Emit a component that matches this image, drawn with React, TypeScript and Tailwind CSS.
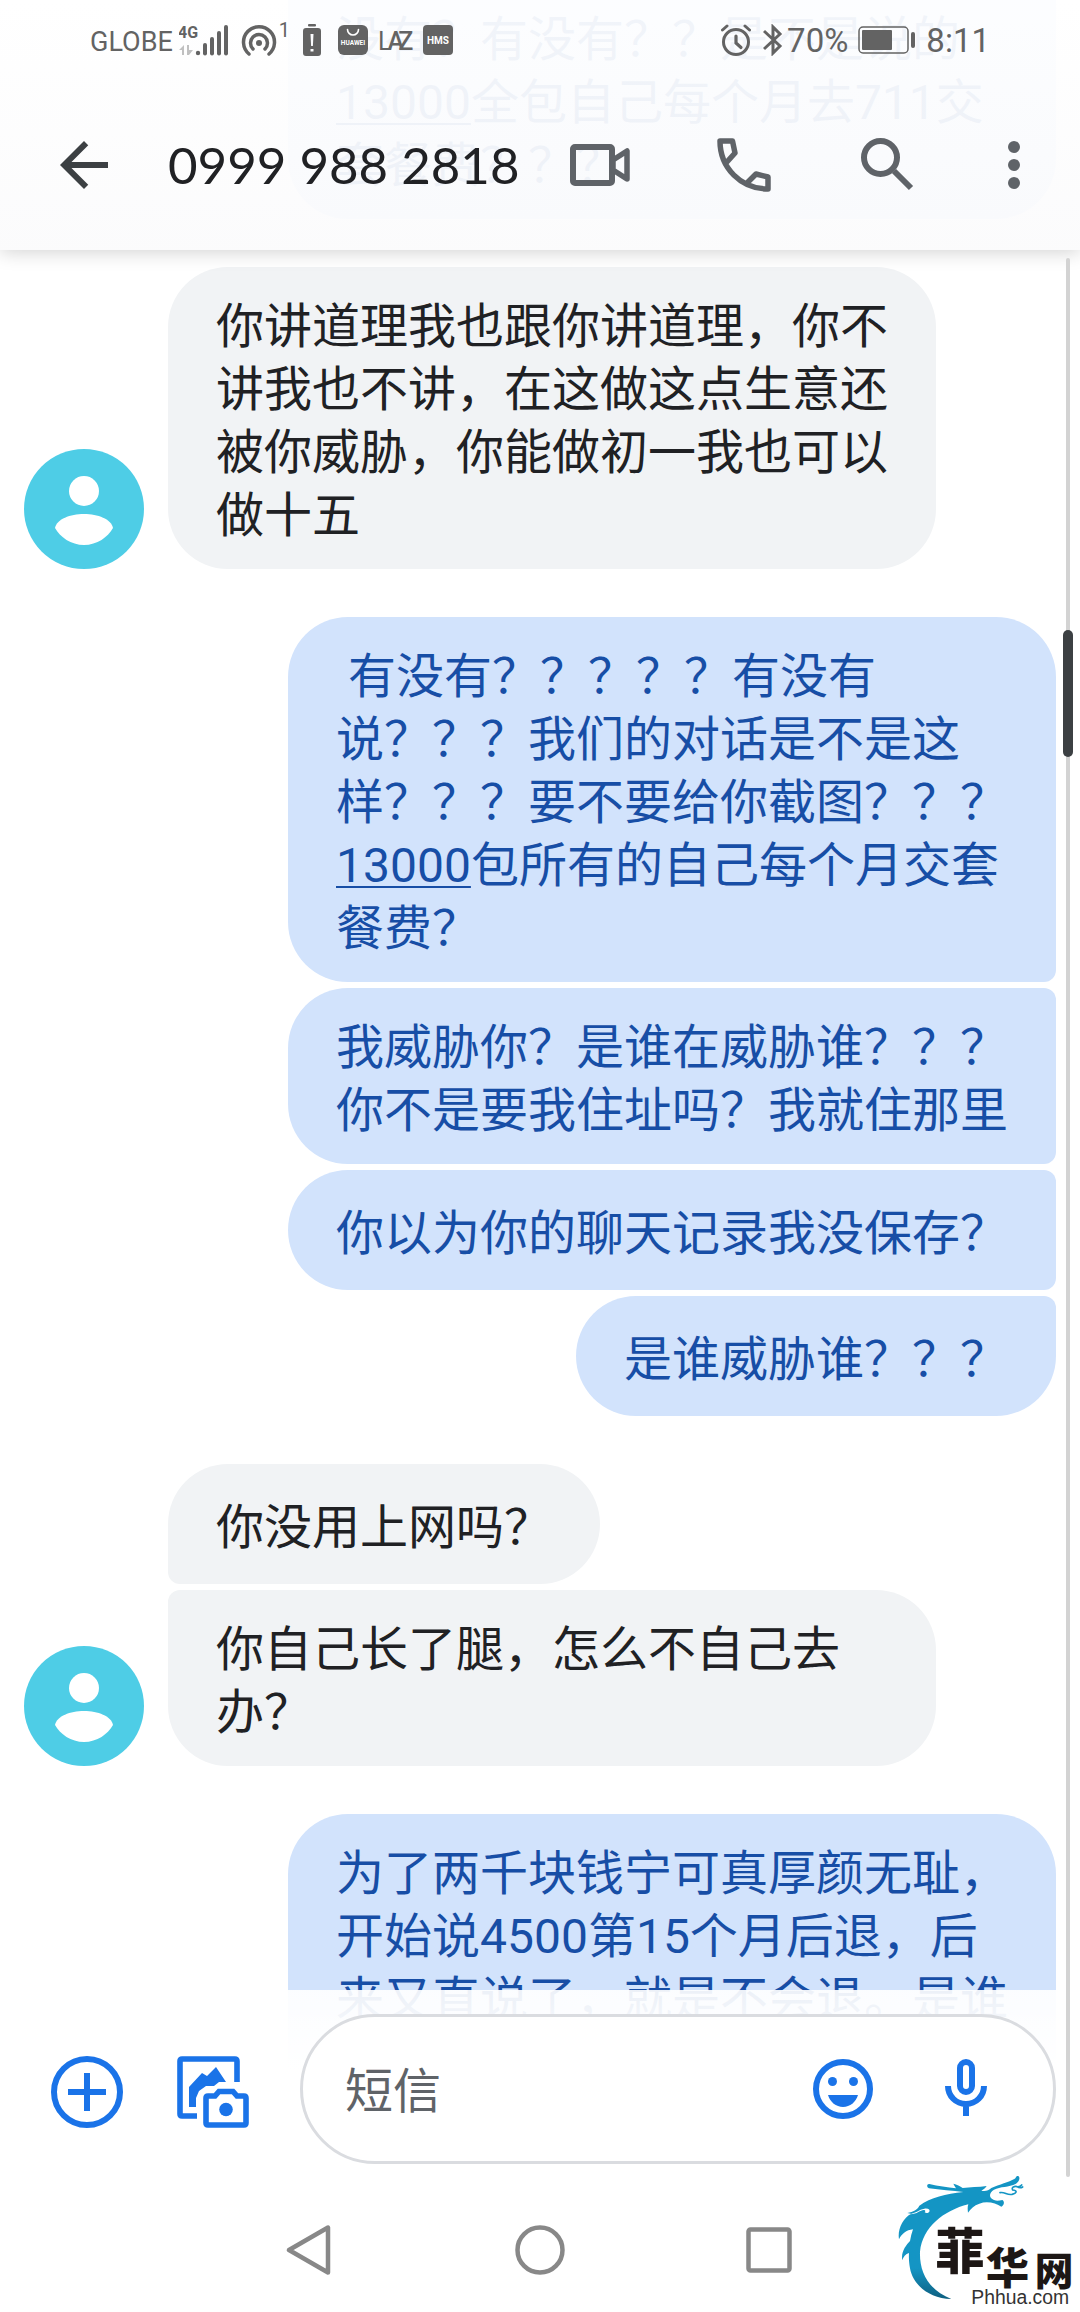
import { ReactNode } from 'react';

type Side = 'in' | 'out';

type Message = {
    shape: string;
    body: ReactNode;
};

type Group = {
    side: Side;
    messages: Message[];
};

function Amount() {
    return <a href="tel:13000" className="underline decoration-2 underline-offset-4">13000</a>;
}

const groups: Group[] = [
    {
        side: 'out',
        messages: [
            {
                shape: 'rounded-b-[60px] pt-2 pb-[22px]',
                body: <>没有？有没有？？是不是说的<Amount />全包自己每个月去711交套餐费？？？</>
            }
        ]
    },
    {
        side: 'in',
        messages: [
            {
                shape: 'rounded-[60px] pt-7 pb-[22px]',
                body: '你讲道理我也跟你讲道理，你不讲我也不讲，在这做这点生意还被你威胁，你能做初一我也可以做十五'
            }
        ]
    },
    {
        side: 'out',
        messages: [
            {
                shape: 'rounded-[60px] rounded-br-xl pt-7 pb-[22px]',
                body: <>{' '}有没有？？？？？有没有说？？？我们的对话是不是这样？？？要不要给你截图？？？<Amount />包所有的自己每个月交套餐费？</>
            },
            {
                shape: 'rounded-l-[60px] rounded-r-xl pt-7 pb-[22px]',
                body: '我威胁你？是谁在威胁谁？？？你不是要我住址吗？我就住那里'
            },
            {
                shape: 'rounded-l-[60px] rounded-r-xl pt-7 pb-[22px]',
                body: '你以为你的聊天记录我没保存？'
            },
            {
                shape: 'rounded-[60px] rounded-tr-xl pt-7 pb-[22px]',
                body: '是谁威胁谁？？？'
            }
        ]
    },
    {
        side: 'in',
        messages: [
            {
                shape: 'rounded-[60px] rounded-bl-xl pt-7 pb-[22px]',
                body: '你没用上网吗？'
            },
            {
                shape: 'rounded-[60px] rounded-tl-xl pt-7 pb-[22px]',
                body: '你自己长了腿，怎么不自己去办？'
            }
        ]
    },
    {
        side: 'out',
        messages: [
            {
                shape: 'rounded-t-[60px] pt-7 pb-10',
                body: '为了两千块钱宁可真厚颜无耻，开始说4500第15个月后退，后来又直说了，就是不会退。是谁'
            }
        ]
    }
];

function Avatar() {
    return (
        <svg viewBox="0 0 120 120" className="size-[120px] shrink-0" aria-hidden="true">
            <circle cx="60" cy="60" r="60" fill="#4ecde6" />
            <circle cx="60" cy="42" r="15" fill="#fff" />
            <path d="M31 79C33 70 46 65 60 65s27 5 29 14c-5 9-16 17-29 17s-24-8-29-17z" fill="#fff" />
        </svg>
    );
}

function Bubble({ side, shape, children }: { side: Side; shape: string; children: ReactNode }) {
    return (
        <div
            className={`flex min-h-[120px] max-w-[768px] items-center px-12 ${shape} ${side === 'in'
                ? 'bg-[#f1f3f5] text-[#202124]'
                : 'bg-[#d2e3fc] text-[#174ea6]'
                }`}
        >
            <p className="text-[48px] leading-[63px] whitespace-pre-wrap">{children}</p>
        </div>
    );
}

function StatusBar() {
    return (
        <div className="flex h-20 items-center justify-between pr-[90px] pl-[90px] text-[#636363]">
            <div className="flex items-center">
                <span className="pt-1 text-[27px] leading-8">GLOBE</span>
                <svg viewBox="0 0 50 32" className="ml-1.5 h-8 w-[50px]" fill="currentColor">
                    <text x="-1" y="14" fontSize="16" fontWeight="700">4G</text>
                    <path d="M0 26 5 21v10H3v-5zM8 21h2v5h4l-4 5H8z" opacity=".4" />
                    <circle cx="19" cy="29" r="2.200" />
                    <rect x="24" y="19" width="4" height="12.500" rx="2" />
                    <rect x="31" y="13" width="4" height="18.500" rx="2" />
                    <rect x="38" y="7" width="4" height="24.500" rx="2" />
                    <rect x="45" y="1" width="4" height="30.500" rx="2" />
                </svg>
                <svg viewBox="0 0 36 32" className="ml-3 h-8 w-9" fill="none" stroke="currentColor" strokeWidth="3.500" strokeLinecap="round">
                    <path d="M8 30a15.500 15.500 0 1 1 20 0" />
                    <path d="M12 25a8.500 8.500 0 1 1 12 0" />
                    <circle cx="18" cy="19" r="3" fill="currentColor" stroke="none" />
                </svg>
                <span className="ml-0.5 self-start text-[20px] leading-4">1</span>
                <svg viewBox="0 0 20 32" className="ml-3 h-8 w-5" fill="currentColor">
                    <rect x="6" y="0" width="8" height="2.500" rx="1" />
                    <path fillRule="evenodd" d="M4 4h12q3 0 3 3v22q0 3-3 3H4q-3 0-3-3V7q0-3 3-3zm4.500 6 .6 12h1.800l.6-12zM8.500 25v2.500h3V25z" />
                </svg>
                <svg viewBox="0 0 30 30" className="ml-4 size-[30px]">
                    <rect width="30" height="30" rx="6" fill="currentColor" />
                    <path d="M9.500 4.500a5.500 5.500 0 0 0 11 0" fill="none" stroke="#fff" strokeWidth="1.600" strokeLinecap="round" />
                    <text x="15" y="20" fontSize="6.500" fontWeight="700" textAnchor="middle" fill="#fff">HUAWEI</text>
                </svg>
                <span className="ml-2.5 flex pt-1 text-[25px] leading-8">
                    <span>L</span>
                    <span className="-ml-1 font-medium">A</span>
                    <span className="-ml-1.5 font-medium">Z</span>
                </span>
                <svg viewBox="0 0 30 30" className="ml-2.5 size-[30px]">
                    <rect width="30" height="30" rx="4" fill="currentColor" />
                    <text x="15" y="18.500" fontSize="10" fontWeight="700" textAnchor="middle" fill="#fff">HMS</text>
                </svg>
            </div>
            <div className="flex items-center">
                <svg viewBox="0 0 30 32" className="h-8 w-[30px]" fill="none" stroke="currentColor" strokeLinecap="round">
                    <circle cx="15" cy="18" r="12.500" strokeWidth="3" />
                    <path d="M15 12v7l5 4.500" strokeWidth="3.200" />
                    <path d="m1.500 6 4.500-4M28.500 6 24 2" strokeWidth="3" />
                </svg>
                <svg viewBox="0 0 20 32" className="ml-3 h-8 w-5" fill="none" stroke="currentColor" strokeWidth="3">
                    <path d="m1 7 16 15-7 7V3l7 7L1 25" />
                </svg>
                <span className="ml-1 pt-0.5 text-[33px] leading-9">70%</span>
                <svg viewBox="0 0 58 28" className="ml-2.5 h-7 w-[58px]" fill="currentColor">
                    <rect x="1" y="1" width="49" height="26" rx="4" fill="none" stroke="currentColor" strokeWidth="1.500" />
                    <rect x="4" y="4" width="30" height="20" rx="1" />
                    <rect x="53" y="6" width="4" height="16" rx="2" />
                </svg>
                <span className="ml-2.5 pt-0.5 text-[33px] leading-9">8:11</span>
            </div>
        </div>
    );
}

function Toolbar() {
    return (
        <div className="flex h-[170px] items-center pr-[30px] pl-12 text-[#5f6368]">
            <button type="button" aria-label="返回" className="text-[#3c4043]">
                <svg viewBox="0 0 24 24" className="size-[72px]" fill="currentColor">
                    <path d="M20 11H7.830l5.590-5.590L12 4l-8 8 8 8 1.410-1.410L7.830 13H20v-2z" />
                </svg>
            </button>
            <h1 className="ml-12 flex-1 font-['Lato',sans-serif] text-[51px] leading-[72px] whitespace-nowrap text-[#202124]">
                0999 988 2818
            </h1>
            <div className="flex gap-[72px]">
                <button type="button" aria-label="视频通话">
                    <svg viewBox="0 0 72 72" className="size-[72px]" fill="none" stroke="currentColor" strokeWidth="6">
                        <rect x="9" y="18" width="39" height="36" rx="2" />
                        <path d="M49 36v-5l14-9v28l-14-9z" strokeWidth="5.500" strokeLinejoin="round" />
                    </svg>
                </button>
                <button type="button" aria-label="拨打电话">
                    <svg viewBox="0 0 72 72" className="size-[72px]" fill="none" stroke="currentColor" strokeWidth="5.500" strokeLinejoin="round">
                        <path d="M18 34 27 24 24.500 12H12c0 27 21 48 48 48V48l-12-3-9 9" />
                    </svg>
                </button>
                <button type="button" aria-label="搜索">
                    <svg viewBox="0 0 72 72" className="size-[72px]" fill="none" stroke="currentColor" strokeWidth="6">
                        <circle cx="28.500" cy="28.500" r="16.500" />
                        <path d="m42 42 17 17" />
                    </svg>
                </button>
            </div>
            <button type="button" aria-label="更多" className="ml-[54px]">
                <svg viewBox="0 0 72 72" className="size-[72px]" fill="currentColor">
                    <circle cx="36" cy="18" r="6" />
                    <circle cx="36" cy="36" r="6" />
                    <circle cx="36" cy="54" r="6" />
                </svg>
            </button>
        </div>
    );
}

function Composer() {
    return (
        <div className="flex items-center py-6 pr-6 pl-[51px] text-[#1a73e8]">
            <div className="flex gap-[54px] pt-1.5">
                <button type="button" aria-label="添加">
                    <svg viewBox="0 0 72 72" className="size-[72px]" fill="none" stroke="currentColor" strokeWidth="6">
                        <circle cx="36" cy="36" r="33" />
                        <path d="M36 17v38M17 36h38" />
                    </svg>
                </button>
                <button type="button" aria-label="图库和相机">
                    <svg viewBox="0 0 72 72" className="size-[72px]" fill="none" stroke="currentColor" strokeWidth="5.600">
                        <path d="M60 26V5q0-2-2-2H5q-2 0-2 2v53q0 2 2 2h15" />
                        <path d="M12 51V31l13-14 5 3 9-9 10 15h-7l-5 4h-8l-7 5-3 7v9z" fill="currentColor" stroke="none" />
                        <path d="M29 42q0-2 2-2h7l4-4.500h14l4 4.500h7q2 0 2 2v25q0 2-2 2H31q-2 0-2-2z" />
                        <circle cx="49" cy="53.500" r="6.800" fill="currentColor" stroke="none" />
                    </svg>
                </button>
            </div>
            <div className="ml-[51px] flex h-[150px] min-w-0 flex-1 items-center rounded-full border-[3px] border-[#dadce0] bg-white pr-[51px] pl-[42px]">
                <input
                    type="text"
                    aria-label="短信"
                    placeholder="短信"
                    className="min-w-0 flex-1 pt-1 text-[48px] leading-[63px] text-[#202124] outline-none placeholder:text-[#5f6368]"
                />
                <button type="button" aria-label="表情">
                    <svg viewBox="0 0 72 72" className="size-[72px]" fill="currentColor">
                        <circle cx="36" cy="36" r="27" fill="none" stroke="currentColor" strokeWidth="6" />
                        <circle cx="25.500" cy="28.500" r="4.500" />
                        <circle cx="46.500" cy="28.500" r="4.500" />
                        <path d="M21 42h30c-2 7-8 12-15 12s-13-5-15-12z" />
                    </svg>
                </button>
                <button type="button" aria-label="语音" className="ml-[51px]">
                    <svg viewBox="0 0 72 72" className="size-[72px]" fill="none" stroke="currentColor" strokeWidth="6">
                        <rect x="30" y="9" width="12" height="30" rx="6" />
                        <path d="M18 33c0 10 8 18 18 18s18-8 18-18M36 51v12" />
                    </svg>
                </button>
            </div>
        </div>
    );
}

function NavBar() {
    return (
        <nav className="flex h-[124px] items-center justify-center gap-[180px] text-[#888]">
            <button type="button" aria-label="后退">
                <svg viewBox="0 0 50 50" className="size-[50px]" fill="none" stroke="currentColor" strokeWidth="4.500" strokeLinejoin="round">
                    <path d="M4 25 43 2.500v45z" />
                </svg>
            </button>
            <button type="button" aria-label="主屏幕">
                <svg viewBox="0 0 50 50" className="size-[50px]" fill="none" stroke="currentColor" strokeWidth="4.500">
                    <circle cx="25" cy="25" r="22.500" />
                </svg>
            </button>
            <button type="button" aria-label="最近任务">
                <svg viewBox="0 0 50 50" className="size-[50px]" fill="none" stroke="currentColor" strokeWidth="4.500">
                    <rect x="3.500" y="4.500" width="41" height="41" rx="2" />
                </svg>
            </button>
        </nav>
    );
}

function Watermark() {
    return (
        <svg viewBox="108 99 552 417" className="pointer-events-none absolute right-0 bottom-0 h-[139px] w-[184px]">
            <defs>
                <linearGradient id="dragon" x1="0" y1="0" x2="0" y2="1">
                    <stop offset="0.750" stopColor="#1495c4" />
                    <stop offset="1" stopColor="#0e5f80" />
                </linearGradient>
            </defs>
            <path
                fill="url(#dragon)"
                d="M274 477C205 476 158 432 150 385 147 368 146 352 147 339 137 342 129 351 127 361 122 335 138 316 150 303 152 291 155 279 159 268 139 270 125 282 117 298 112 268 128 236 153 221L142 219C160 215 172 209 178 197 212 172 258 162 310 156 278 153 240 149 207 145 199 142 200 131 208 132 235 139 262 141 288 145 285 140 282 136 280 131 290 133 301 138 308 144 330 141 356 142 380 138 376 145 370 149 364 152 376 154 386 152 394 144 418 134 447 126 463 117 469 113 468 106 475 108 482 113 477 125 468 131 446 142 421 139 402 149 386 159 386 174 402 180 412 184 418 181 427 180 435 185 432 196 424 200 408 190 382 182 358 191 342 196 332 206 324 218 323 209 322 201 325 193 250 212 188 262 180 335 178 398 206 450 274 477z"
            />
            <path fill="#fff" d="M143 222c22 1 34-14 50-16 13-2 18 4 15 9-3 4-9 5-14 2 3-3 3-6-2-7-12-1-22 16-49 12z" />
            <path
                fill="none"
                stroke="#1495c4"
                strokeWidth="5"
                strokeLinecap="round"
                d="M420 158c14-3 21 8 36 5 16-4 16-12 2-13-5-9 6-12 13-10 6 1 10 0 14-5m-14 5c6 4 12 4 17 1"
            />
            <g fill="#1d1715" fontFamily="'Noto Sans CJK SC', sans-serif" fontWeight="900">
                <text x="226" y="388" fontSize="148">菲</text>
                <text x="377" y="432" fontSize="130">华</text>
                <text x="524" y="435" fontSize="116">网</text>
            </g>
            <text x="334" y="491" fontSize="58" fill="#333" fontFamily="'Liberation Sans', sans-serif">Phhua.com</text>
        </svg>
    );
}

export default function App() {
    return (
        <div className="relative h-screen overflow-hidden bg-white font-['Roboto','Noto_Sans_CJK_SC',sans-serif]" lang="zh-CN">
            <main className="flex flex-col gap-12 px-6">
                {groups.map((group, i) => (
                    <section key={i} className={`flex items-end gap-6 ${group.side === 'out' ? 'justify-end' : ''}`}>
                        {group.side === 'in' && <Avatar />}
                        <div className={`flex flex-col gap-1.5 ${group.side === 'out' ? 'items-end' : 'items-start'}`}>
                            {group.messages.map((message, j) => (
                                <Bubble key={j} side={group.side} shape={message.shape}>{message.body}</Bubble>
                            ))}
                        </div>
                    </section>
                ))}
            </main>

            <header className="absolute inset-x-0 top-0 bg-linear-to-b from-white/94 to-[#fbfbfc]/94 shadow-[0_2px_18px_rgba(0,0,0,0.18)]">
                <StatusBar />
                <Toolbar />
            </header>

            <footer className="absolute inset-x-0 bottom-0 bg-linear-to-b from-white/92 to-white to-25%">
                <Composer />
                <NavBar />
            </footer>

            {/* scroll position */}
            <div className="absolute top-[258px] right-[7px] bottom-[135px] flex w-2.5 justify-center">
                <div className="w-1 rounded-full bg-[#d3d3d3]" />
                <div className="absolute top-[372px] h-[127px] w-2.5 rounded-full bg-[#3c4043]" />
            </div>

            <Watermark />
        </div>
    );
}
